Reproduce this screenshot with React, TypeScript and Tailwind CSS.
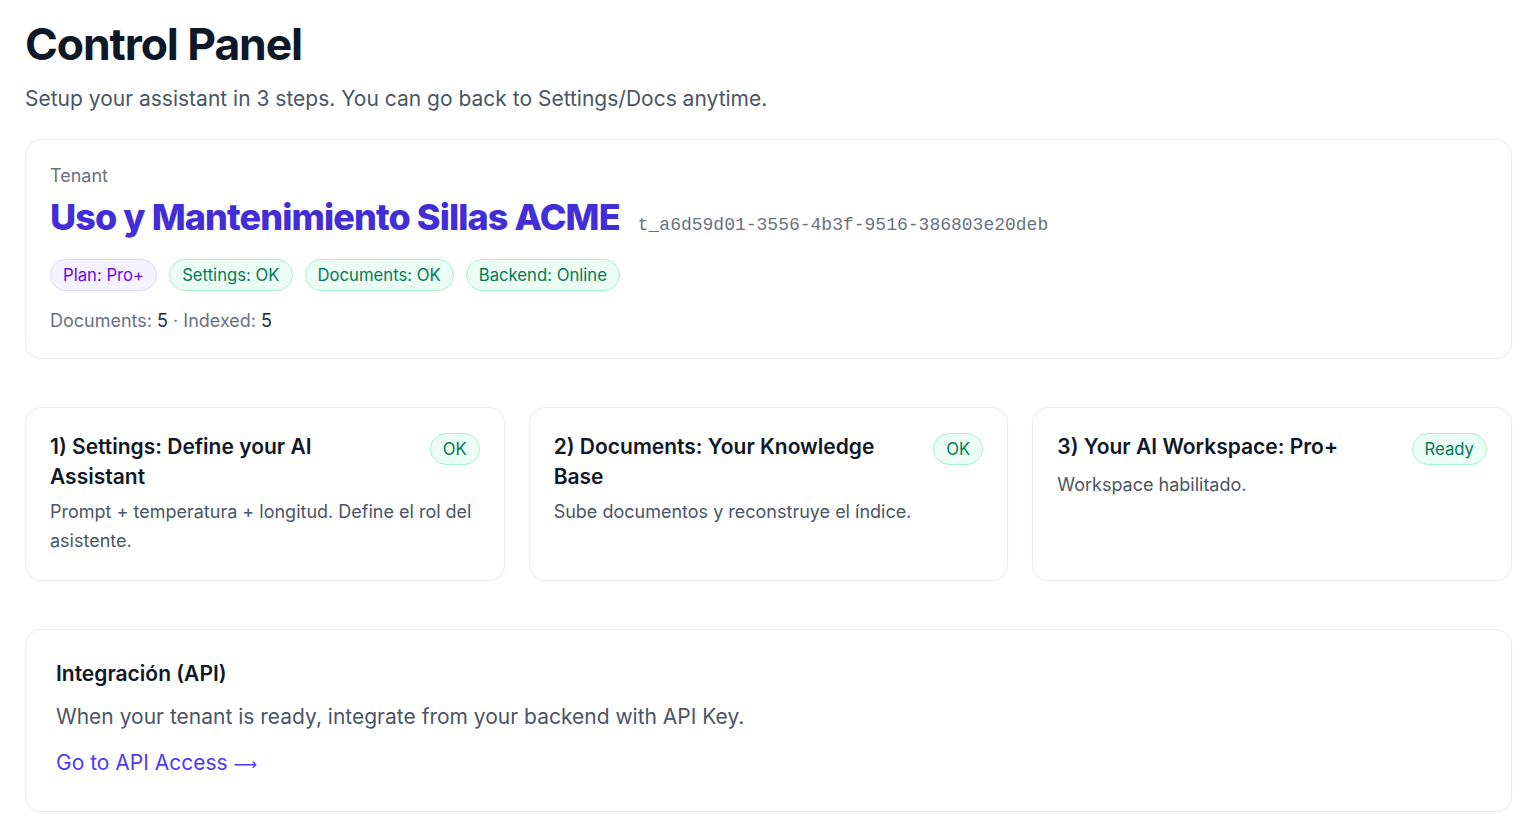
import type { ReactNode } from "react";

type Tone = "violet" | "green";

function Pill({ tone = "green", children }: { tone?: Tone; children: ReactNode }) {
  const cls =
    tone === "violet"
      ? "bg-violet-50 border-violet-200 text-violet-700"
      : "bg-emerald-50 border-emerald-200 text-emerald-700";
  return (
    <span className={`inline-flex items-center rounded-full border px-3 py-[3px] text-[16.7px] leading-6 whitespace-nowrap ${cls}`}>
      {children}
    </span>
  );
}

const steps = [
  {
    title: "1) Settings: Define your AI Assistant",
    desc: "Prompt + temperatura + longitud. Define el rol del asistente.",
    status: "OK",
  },
  {
    title: "2) Documents: Your Knowledge Base",
    desc: "Sube documentos y reconstruye el índice.",
    status: "OK",
  },
  {
    title: "3) Your AI Workspace: Pro+",
    desc: "Workspace habilitado.",
    status: "Ready",
  },
];

export default function App() {
  const tenantId = "t_a6d59d01-3556-4b3f-9516-386803e20deb";

  return (
    <div className="min-h-screen bg-white pl-[25px] pr-[22px] pt-[22px] pb-4 font-['Inter','Noto_Sans',sans-serif] text-gray-900">
      <h1 className="text-[44.5px] leading-none font-bold tracking-tight text-gray-900">Control Panel</h1>
      <p className="mt-[18px] text-[21px] leading-7 text-gray-600">
        Setup your assistant in 3 steps. You can go back to Settings/Docs anytime.
      </p>

      {/* tenant summary */}
      <section className="mt-[26px] rounded-2xl border border-[#ececec] bg-white px-6 pt-6 pb-[25px] shadow-[0_1px_2px_rgba(0,0,0,0.03)]">
        <div className="text-lg leading-6 text-gray-500">Tenant</div>
        <div className="mt-[9px] flex items-baseline gap-[18px]">
          <h2 className="text-4xl leading-10 font-extrabold tracking-tight text-indigo-700">
            Uso y Mantenimiento Sillas ACME
          </h2>
          <span className="font-['Liberation_Mono',monospace] text-lg text-gray-500">{tenantId}</span>
        </div>
        <div className="mt-5 flex flex-wrap gap-3">
          <Pill tone="violet">Plan: Pro+</Pill>
          <Pill>Settings: OK</Pill>
          <Pill>Documents: OK</Pill>
          <Pill>Backend: Online</Pill>
        </div>
        <div className="mt-[18px] text-lg leading-6 text-gray-500">
          Documents: <span className="text-gray-800">5</span> · Indexed:{" "}
          <span className="text-gray-800">5</span>
        </div>
      </section>

      {/* setup steps */}
      <div className="mt-12 grid grid-cols-3 gap-6">
        {steps.map((s) => (
          <div
            key={s.title}
            className="rounded-2xl border border-[#ececec] bg-white px-6 pt-6 pb-[25px] shadow-[0_1px_2px_rgba(0,0,0,0.03)]"
          >
            <div className="flex items-start justify-between gap-4">
              <h3 className="max-w-[330px] text-[21px] leading-[30px] font-semibold text-gray-900">{s.title}</h3>
              <div className="pt-px">
                <Pill>{s.status}</Pill>
              </div>
            </div>
            <p className="mt-[5px] text-lg leading-relaxed text-gray-600">{s.desc}</p>
          </div>
        ))}
      </div>

      {/* API integration */}
      <section className="mt-12 rounded-2xl border border-[#ececec] bg-white px-[30px] pt-[30px] pb-8 shadow-[0_1px_2px_rgba(0,0,0,0.03)]">
        <h3 className="text-[21px] leading-7 font-semibold text-gray-900">Integración (API)</h3>
        <p className="mt-[15px] text-[21px] leading-7 text-gray-600">
          When your tenant is ready, integrate from your backend with API Key.
        </p>
        <a href="#" className="mt-[18px] inline-block text-[21px] leading-7 text-indigo-600">
          Go to API Access <span className="font-['DejaVu_Sans',sans-serif] text-[16.5px]">⟶</span>
        </a>
      </section>
    </div>
  );
}
